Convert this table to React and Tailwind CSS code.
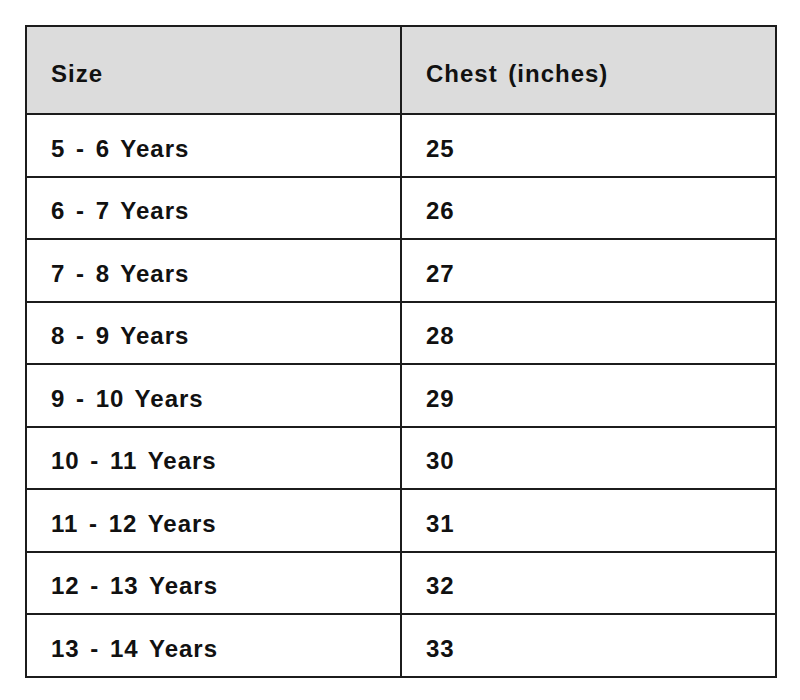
import React from 'react';

const rows = [
  ['5 - 6 Years', '25'],
  ['6 - 7 Years', '26'],
  ['7 - 8 Years', '27'],
  ['8 - 9 Years', '28'],
  ['9 - 10 Years', '29'],
  ['10 - 11 Years', '30'],
  ['11 - 12 Years', '31'],
  ['12 - 13 Years', '32'],
  ['13 - 14 Years', '33'],
];

export default function App() {
  return (
    <div className="w-[800px] h-[700px] bg-white pt-[25px] pl-[25px]" style={{ fontFamily: '"Liberation Sans", Arial, sans-serif' }}>
      <table className="w-[752px] border-collapse border-2 border-[#1c1c1c] table-fixed text-[24px] font-bold text-[#111] tracking-[1px] [word-spacing:3px]">
        <thead>
          <tr className="bg-[#dcdcdc] h-[88px]">
            <th className="w-1/2 border-2 border-[#1c1c1c] text-left font-bold pl-[24px] pt-[8px]">Size</th>
            <th className="w-1/2 border-2 border-[#1c1c1c] text-left font-bold pl-[24px] pt-[8px]">Chest (inches)</th>
          </tr>
        </thead>
        <tbody>
          {rows.map(([size, chest]) => (
            <tr key={size} className="h-[62.5px]">
              <td className="border-2 border-[#1c1c1c] pl-[24px] pt-[7px]">{size}</td>
              <td className="border-2 border-[#1c1c1c] pl-[24px] pt-[7px]">{chest}</td>
            </tr>
          ))}
        </tbody>
      </table>
    </div>
  );
}
